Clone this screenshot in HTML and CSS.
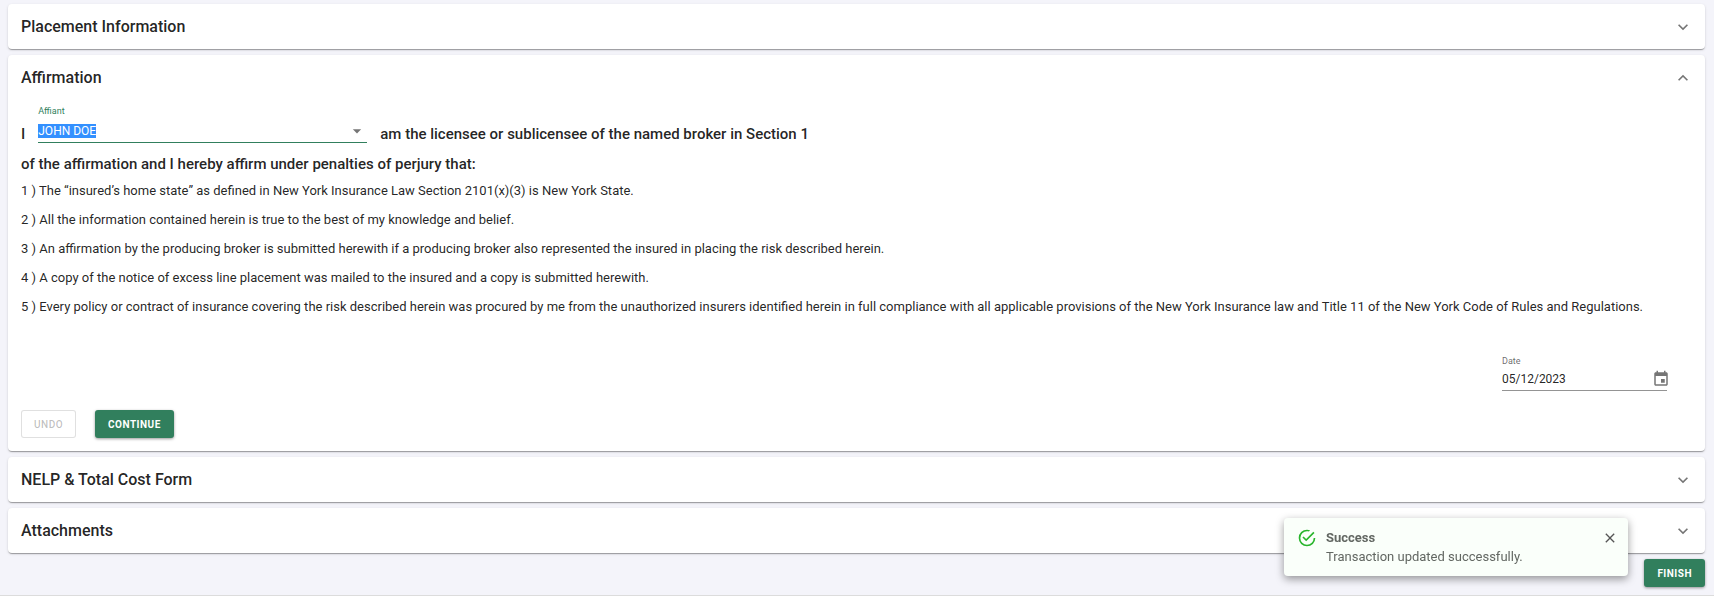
FILE: index.html
```html
<!DOCTYPE html>
<html lang="en">
<head>
<meta charset="utf-8">
<title>Transaction</title>
<link rel="stylesheet" href="styles.css">
</head>
<body>
<main class="page">
  <section class="panel">
    <button class="panel-header" type="button" aria-expanded="false">
      <span class="panel-title">Placement Information</span>
      <svg class="chevron" viewBox="0 0 24 24" aria-hidden="true"><path d="M16.59 8.59 12 13.17 7.41 8.59 6 10l6 6 6-6z"/></svg>
    </button>
  </section>

  <section class="panel">
    <button class="panel-header" type="button" aria-expanded="true">
      <span class="panel-title">Affirmation</span>
      <svg class="chevron chevron-up" viewBox="0 0 24 24" aria-hidden="true"><path d="M16.59 8.59 12 13.17 7.41 8.59 6 10l6 6 6-6z"/></svg>
    </button>
    <div class="panel-body">
      <div class="statement">
        <span>I</span>
        <div class="field field-affiant">
          <label class="field-label label-active" for="affiant">Affiant</label>
          <div class="field-box box-active">
            <input class="field-input" id="affiant" type="text" value="JOHN DOE" role="combobox" aria-expanded="false" autocomplete="off">
            <svg class="caret" viewBox="0 0 24 24" aria-hidden="true"><path d="M7 10l5 5 5-5z"/></svg>
          </div>
        </div>
        <span>am the licensee or sublicensee of the named broker in Section 1</span>
      </div>
      <p class="statement-rest">of the affirmation and I hereby affirm under penalties of perjury that:</p>
      <div class="clauses">
        <p class="clause">1 ) The “insured’s home state” as defined in New York Insurance Law Section 2101(x)(3) is New York State.</p>
        <p class="clause">2 ) All the information contained herein is true to the best of my knowledge and belief.</p>
        <p class="clause">3 ) An affirmation by the producing broker is submitted herewith if a producing broker also represented the insured in placing the risk described herein.</p>
        <p class="clause">4 ) A copy of the notice of excess line placement was mailed to the insured and a copy is submitted herewith.</p>
        <p class="clause">5 ) Every policy or contract of insurance covering the risk described herein was procured by me from the unauthorized insurers identified herein in full compliance with all applicable provisions of the New York Insurance law and Title 11 of the New York Code of Rules and Regulations.</p>
      </div>
      <div class="date-row">
        <div class="field field-date">
          <label class="field-label" for="date">Date</label>
          <div class="field-box box-date">
            <input class="field-input" id="date" type="text" value="05/12/2023">
            <button class="icon-button date-button" type="button" aria-label="Choose date">
              <svg class="calendar" viewBox="0 0 24 24" aria-hidden="true"><path d="M17 12h-5v5h5v-5zM16 1v2H8V1H6v2H5c-1.11 0-1.99.9-1.99 2L3 19c0 1.1.89 2 2 2h14c1.1 0 2-.9 2-2V5c0-1.1-.9-2-2-2h-1V1h-2zm3 18H5V8h14v11z"/></svg>
            </button>
          </div>
        </div>
      </div>
      <div class="actions">
        <button class="btn btn-outlined" type="button" disabled>UNDO</button>
        <button class="btn btn-filled" type="button">CONTINUE</button>
      </div>
    </div>
  </section>

  <section class="panel">
    <button class="panel-header" type="button" aria-expanded="false">
      <span class="panel-title">NELP &amp; Total Cost Form</span>
      <svg class="chevron" viewBox="0 0 24 24" aria-hidden="true"><path d="M16.59 8.59 12 13.17 7.41 8.59 6 10l6 6 6-6z"/></svg>
    </button>
  </section>

  <section class="panel">
    <button class="panel-header" type="button" aria-expanded="false">
      <span class="panel-title">Attachments</span>
      <svg class="chevron" viewBox="0 0 24 24" aria-hidden="true"><path d="M16.59 8.59 12 13.17 7.41 8.59 6 10l6 6 6-6z"/></svg>
    </button>
  </section>

  <div class="page-actions">
    <button class="btn btn-filled" type="button">FINISH</button>
  </div>
</main>

<div class="toast" role="status">
  <svg class="toast-icon" viewBox="0 0 24 24" aria-hidden="true"><path d="M20,12A8,8 0 0,1 12,20A8,8 0 0,1 4,12A8,8 0 0,1 12,4C12.76,4 13.5,4.11 14.2,4.31L15.77,2.74C14.61,2.26 13.34,2 12,2A10,10 0 0,0 2,12A10,10 0 0,0 12,22A10,10 0 0,0 22,12M7.91,10.08L6.5,11.5L11,16L21,6L19.59,4.58L11,13.17L7.91,10.08Z"/></svg>
  <div class="toast-text">
    <strong class="toast-title">Success</strong>
    <span>Transaction updated successfully.</span>
  </div>
  <button class="icon-button toast-close" type="button" aria-label="Close">
    <svg class="close" viewBox="0 0 24 24" aria-hidden="true"><path d="M19 6.41 17.59 5 12 10.59 6.41 5 5 6.41 10.59 12 5 17.59 6.41 19 12 13.41 17.59 19 19 17.59 13.41 12z"/></svg>
  </button>
</div>
<script src="main.js"></script>
</body>
</html>
```
FILE: styles.css
```css
* {
  box-sizing: border-box;
}

body {
  margin: 0;
  background: #f4f4fa;
  color: rgba(0, 0, 0, 0.87);
  font-family: Roboto, "Liberation Sans", sans-serif;
  font-size: 13px;
}

p {
  margin: 0;
}

button,
input {
  font-family: inherit;
}

.page {
  display: flex;
  flex-direction: column;
  gap: 6px;
  padding: 4px 9px 8px 8px;
  border-bottom: 1px solid #dcdcdc;
}

.panel {
  background: #fff;
  border-radius: 4px;
  box-shadow: 0 2px 1px -1px rgba(0, 0, 0, 0.2), 0 1px 1px 0 rgba(0, 0, 0, 0.14), 0 1px 3px 0 rgba(0, 0, 0, 0.12);
}

.panel-header {
  display: flex;
  align-items: center;
  justify-content: space-between;
  width: 100%;
  height: 45px;
  padding: 0 12px 0 13px;
  border: 0;
  background: none;
  color: inherit;
}

.panel-title {
  font-size: 16px;
  font-weight: 500;
}

.chevron {
  width: 20px;
  height: 20px;
  fill: rgba(0, 0, 0, 0.54);
}

.chevron-up {
  transform: rotate(180deg);
}

.panel-body {
  padding: 5px 12px 13px 13px;
}

.statement {
  display: flex;
  align-items: flex-end;
  gap: 13px;
  font-size: 15px;
  font-weight: 500;
  line-height: 18px;
}

.statement-rest {
  padding-top: 12px;
  font-size: 15px;
  font-weight: 500;
  line-height: 18px;
}

.field {
  display: flex;
  flex-direction: column;
}

.field-affiant {
  width: 329px;
}

.field-date {
  width: 165px;
}

.field-label {
  color: rgba(0, 0, 0, 0.6);
  font-size: 9px;
  font-weight: 400;
  line-height: 12px;
}

.label-active {
  color: #317f5d;
}

.field-box {
  display: flex;
  align-items: center;
  height: 26px;
  padding-top: 2px;
  border-bottom: 1px solid rgba(0, 0, 0, 0.42);
}

.box-active {
  border-bottom-color: #317f5d;
}

.box-date {
  height: 24px;
  padding-top: 0;
}

.field-input {
  flex: 1;
  min-width: 0;
  padding: 0;
  border: 0;
  outline: 0;
  background: none;
  color: inherit;
  font-size: 12px;
}

.field-input::selection {
  background: #3390ff;
  color: #fff;
}

.caret {
  width: 20px;
  height: 20px;
  fill: rgba(0, 0, 0, 0.54);
}

.clauses {
  padding-top: 3px;
}

.clause {
  line-height: 29px;
}

.date-row {
  display: flex;
  justify-content: flex-end;
  padding: 34px 26px 0 0;
}

.icon-button {
  display: flex;
  padding: 0;
  border: 0;
  background: none;
}

.date-button {
  margin-right: -3px;
}

.calendar {
  width: 18px;
  height: 18px;
  fill: rgba(0, 0, 0, 0.54);
}

.actions {
  display: flex;
  gap: 19px;
  padding-top: 19px;
}

.btn {
  height: 28px;
  padding: 0 13px;
  border: 0;
  border-radius: 3px;
  font-size: 10px;
  font-weight: 700;
  letter-spacing: 0.5px;
}

.btn-filled {
  background: #317f5d;
  color: #fff;
  box-shadow: 0 1px 3px rgba(0, 0, 0, 0.4);
}

.btn-outlined {
  padding: 0 12px;
  border: 1px solid rgba(0, 0, 0, 0.12);
  background: #fff;
  color: rgba(0, 0, 0, 0.26);
  font-weight: 500;
}

.page-actions {
  display: flex;
  justify-content: flex-end;
}

.toast {
  position: fixed;
  right: 86px;
  bottom: 20px;
  display: flex;
  width: 344px;
  padding: 10px;
  padding-left: 13px;
  border-radius: 4px;
  background: #fafffa;
  color: #626762;
  font-size: 13px;
  line-height: 19px;
  box-shadow: 0 3px 8px rgba(0, 0, 0, 0.4);
}

.toast-icon {
  width: 20px;
  height: 20px;
  fill: #28b52c;
}

.toast-text {
  display: flex;
  flex: 1;
  flex-direction: column;
  padding-left: 9px;
}

.toast-title {
  font-weight: 700;
}

.toast-close {
  align-self: flex-start;
  padding-top: 2px;
}

.close {
  width: 16px;
  height: 16px;
  fill: #555;
}
```
FILE: main.js
```js
const affiant = document.getElementById("affiant");
affiant.focus();
affiant.select();
```
